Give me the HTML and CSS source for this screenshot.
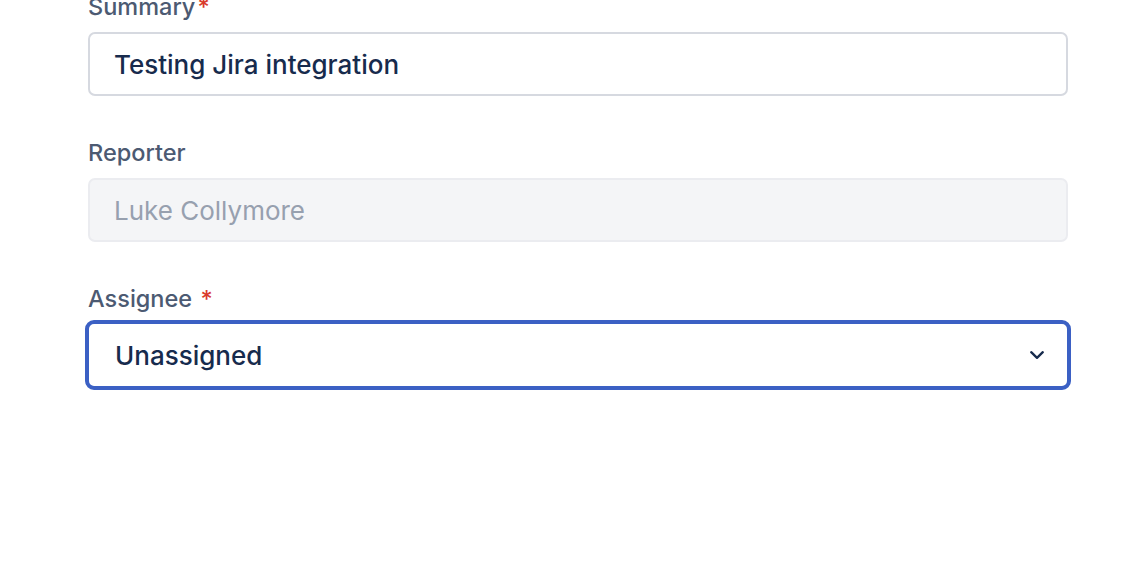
FILE: index.html
```html
<!DOCTYPE html>
<html lang="en">
<head>
<meta charset="utf-8">
<title>Create issue</title>
<link rel="stylesheet" href="styles.css">
</head>
<body>
<form class="form">
  <div class="field">
    <label class="label">Summary<span class="req">*</span></label>
    <div class="input">Testing Jira integration</div>
  </div>
  <div class="field">
    <label class="label">Reporter</label>
    <div class="input input-disabled">Luke Collymore</div>
  </div>
  <div class="field">
    <label class="label">Assignee <span class="req">*</span></label>
    <div class="input select">
      <span>Unassigned</span>
      <svg class="chevron" width="16" height="16" viewBox="0 0 16 16" aria-hidden="true">
        <path d="M2.2 5.2 L8 10.8 L13.8 5.2" fill="none" stroke="#172B4D" stroke-width="2.3" stroke-linecap="round" stroke-linejoin="round"/>
      </svg>
    </div>
  </div>
</form>
</body>
</html>
```
FILE: styles.css
```css
html, body {
  margin: 0;
  padding: 0;
  background: #ffffff;
}
body {
  font-family: Inter, "Noto Sans", "Liberation Sans", sans-serif;
  overflow: hidden;
}
.form {
  width: 980px;
  margin: -7px 0 0 88px;
  display: flex;
  flex-direction: column;
  gap: 43px;
}
.field {
  display: flex;
  flex-direction: column;
  gap: 11px;
}
.label {
  display: block;
  font-size: 23.5px;
  line-height: 28px;
  font-weight: 500;
  color: #4c5a72;
}
.req {
  color: #d93a2b;
  margin-left: 2px;
}
.input {
  box-sizing: border-box;
  height: 64px;
  border: 2px solid #d6d9e0;
  border-radius: 7px;
  padding: 0 24px;
  display: flex;
  align-items: center;
  font-size: 26px;
  font-weight: 500;
  color: #172b4d;
  background: #fff;
}
.input-disabled {
  background: #f4f5f7;
  border-color: #ebecf0;
  color: #97a0af;
  font-weight: 400;
}
.select {
  height: 70px;
  margin: -4px -3px 0;
  border: 4px solid #3b60c4;
  border-radius: 9px;
  padding: 0 22px 0 26px;
  justify-content: space-between;
}
.chevron {
  display: block;
}
```
